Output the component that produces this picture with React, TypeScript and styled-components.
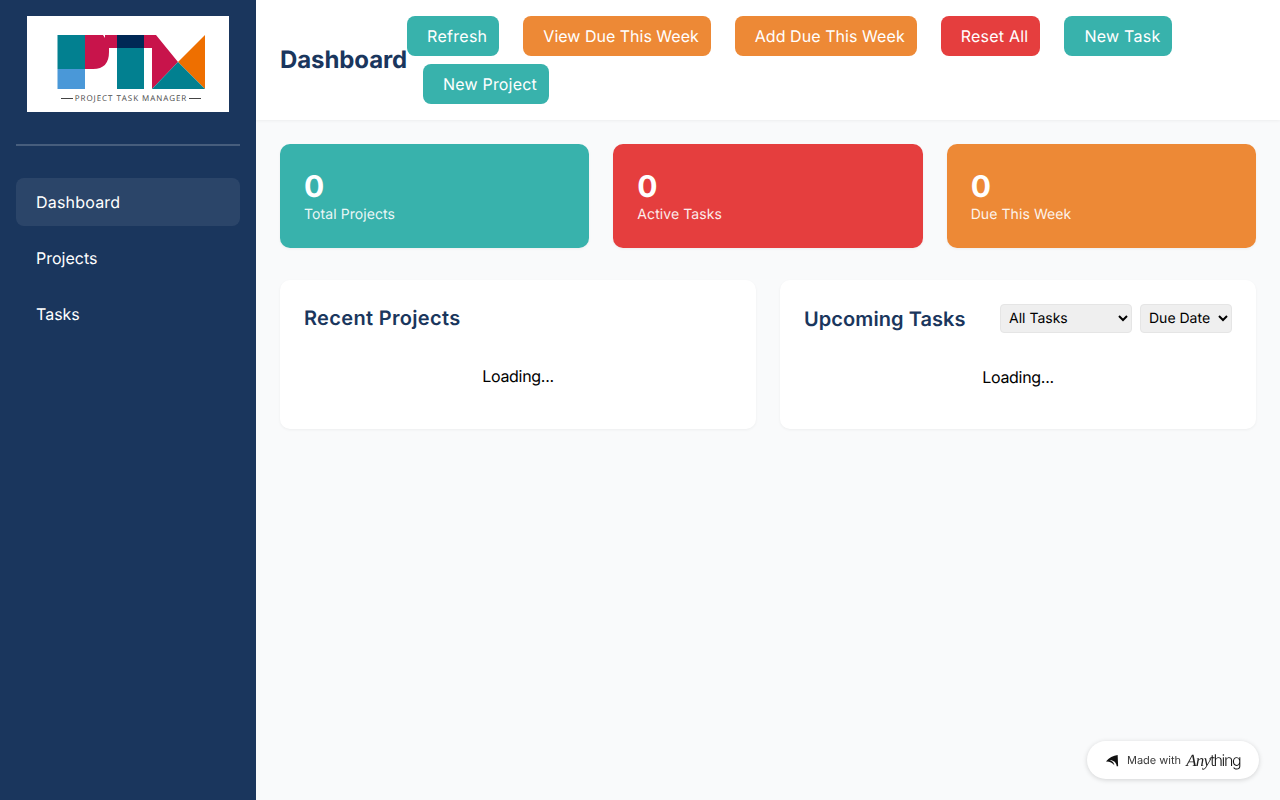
import React from "react";
import styled, { createGlobalStyle } from "styled-components";

const Global = createGlobalStyle`
  * { box-sizing: border-box; }
  html, body { margin: 0; padding: 0; height: 100%; }
  body { font-family: Inter, "Liberation Sans", sans-serif; font-weight: 370; background: #f9fafb; color: #000; overflow: hidden; text-rendering: geometricPrecision; }
`;

const Shell = styled.div`
  display: flex;
  height: 800px;
  width: 1280px;
`;
const Sidebar = styled.aside`
  width: 256px;
  flex: none;
  background: #1a365d;
  padding: 16px;
  display: flex;
  flex-direction: column;
`;
const LogoBox = styled.div`
  height: 130px;
  border-bottom: 2px solid rgba(255, 255, 255, 0.2);
  display: flex;
  justify-content: center;
  align-items: flex-start;
  margin-bottom: 32px;
`;
const LogoSvg = styled.svg`
  display: block;
  width: 202px;
  height: 96px;
`;
const NavItem = styled.a<{ $active?: boolean }>`
  display: block;
  height: 48px;
  line-height: 48px;
  padding-left: 20px;
  margin-bottom: 8px;
  border-radius: 8px;
  font-size: 16px;
  color: #fff;
  letter-spacing: ${(p) => (p.$active ? "0.2px" : "0")};
  background: ${(p) => (p.$active ? "rgba(255,255,255,0.08)" : "transparent")};
`;
const Main = styled.main`
  flex: 1;
  min-width: 0;
  display: flex;
  flex-direction: column;
`;
const Header = styled.header`
  height: 120px;
  background: #fff;
  padding: 16px 24px;
  display: flex;
  align-items: center;
  box-shadow: 0 1px 3px rgba(0, 0, 0, 0.05);
`;
const Title = styled.h1`
  margin: 0 0 2px;
  font-size: 24px;
  line-height: 29px;
  font-weight: 700;
  letter-spacing: -0.1px;
  color: #1a365d;
  flex: none;
`;
const Actions = styled.div`
  display: flex;
  flex-wrap: wrap;
  gap: 8px;
  align-content: center;
`;
const ActionButton = styled.button<{ $color: string; $first?: boolean; $track: number }>`
  height: 40px;
  padding: 0 12px 0 20px;
  margin-left: ${(p) => (p.$first ? 0 : 16)}px;
  border: none;
  border-radius: 8px;
  background: ${(p) => p.$color};
  color: #fff;
  font-family: inherit;
  font-size: 16px;
  font-weight: inherit;
  letter-spacing: ${(p) => p.$track}px;
  text-rendering: geometricPrecision;
  white-space: nowrap;
`;
const Content = styled.div`
  padding: 24px;
  display: flex;
  flex-direction: column;
  gap: 32px;
`;
const Stats = styled.div`
  display: grid;
  grid-template-columns: repeat(3, 1fr);
  gap: 24px;
`;
const StatCard = styled.div<{ $color: string }>`
  height: 104px;
  border-radius: 10px;
  background: ${(p) => p.$color};
  color: #fff;
  padding: 24px;
  box-shadow: 0 1px 3px rgba(0, 0, 0, 0.05);
`;
const StatValue = styled.div`
  font-size: 30px;
  line-height: 38px;
  font-weight: 700;
`;
const StatLabel = styled.div`
  font-size: 14px;
  line-height: 17px;
  letter-spacing: 0.08px;
  opacity: 0.9;
`;
const Panels = styled.div`
  display: grid;
  grid-template-columns: 1fr 1fr;
  gap: 24px;
`;
const Panel = styled.section`
  height: 149px;
  background: #fff;
  border-radius: 10px;
  padding: 24px;
  box-shadow: 0 1px 3px rgba(0, 0, 0, 0.05);
`;
const PanelHead = styled.div`
  display: flex;
  align-items: flex-start;
  justify-content: space-between;
  height: 29px;
`;
const PanelTitle = styled.h2<{ $track: number; $drop: number }>`
  margin: 0;
  padding-top: ${(p) => p.$drop}px;
  font-size: 20px;
  line-height: 29px;
  font-weight: 600;
  letter-spacing: ${(p) => p.$track}px;
  color: #1a365d;
`;
const Filters = styled.div`
  display: flex;
  gap: 8px;
`;
const Select = styled.select<{ $w: number }>`
  width: ${(p) => p.$w}px;
  height: 29px;
  padding: 4px;
  border: 1px solid #e5e5e5;
  border-radius: 4px;
  background-color: #efefef;
  color: #000;
  font-family: inherit;
  font-size: 14px;
  text-rendering: geometricPrecision;
`;
const Loading = styled.div<{ $top: number }>`
  margin-top: ${(p) => p.$top}px;
  text-align: center;
  font-size: 16px;
  line-height: 19px;
  letter-spacing: -0.3px;
`;
const Badge = styled.div`
  position: fixed;
  right: 21px;
  bottom: 21px;
  width: 172px;
  height: 38px;
  background: #fff;
  border-radius: 19px;
  box-shadow: 0 1px 5px rgba(0, 0, 0, 0.16);
  display: flex;
  align-items: center;
  padding-left: 18px;
  gap: 7px;
`;
const BadgeIcon = styled.svg`
  width: 15px;
  height: 15px;
  flex: none;
`;
const BadgeText = styled.span`
  font-size: 11px;
  color: #3a3a3a;
  margin-right: 4px;
  white-space: nowrap;
`;
const BrandAny = styled.span`
  font-family: "Liberation Serif", serif;
  font-style: italic;
  font-size: 17px;
  letter-spacing: -0.8px;
  color: #222;
`;
const BrandThing = styled.span`
  font-family: Inter, sans-serif;
  font-weight: 260;
  font-size: 16px;
  letter-spacing: -1.4px;
  color: #111;
`;
const Brand = styled.span`
  white-space: nowrap;
  line-height: 1;
  margin-left: -6px;
`;

const Logo = () => (
  <LogoSvg viewBox="27 16 202 96">
    <rect x="27" y="16" width="202" height="96" fill="#fff" />
    <rect x="57.5" y="35" width="27.5" height="34" fill="#028090" />
    <rect x="57.5" y="69" width="27.5" height="20" fill="#4a98d8" />
    <path d="M85 35H103L105 38V35H117V48H109V52Q109 69 93 69H85Z" fill="#c8144b" />
    <rect x="117" y="35" width="27" height="13" fill="#002855" />
    <rect x="117" y="48" width="27" height="41" fill="#028090" />
    <polygon points="144,35 156,35 178,62 152,89 152,48 144,48" fill="#c8144b" />
    <polygon points="205,35 205,89 178,62" fill="#ee6f00" />
    <polygon points="152,89 178,62 205,89" fill="#028090" />
    <rect x="61" y="98" width="12" height="1" fill="#444" />
    <rect x="189" y="98" width="12" height="1" fill="#444" />
    <text
      x="131"
      y="101"
      textAnchor="middle"
      fontFamily="'Open Sans', sans-serif"
      fontSize="8"
      letterSpacing="0.95"
      fill="#4a4a4a"
    >
      PROJECT TASK MANAGER
    </text>
  </LogoSvg>
);

export default function App() {
  return (
    <Shell>
      <Global />
      <Sidebar>
        <LogoBox>
          <Logo />
        </LogoBox>
        <NavItem $active>Dashboard</NavItem>
        <NavItem>Projects</NavItem>
        <NavItem>Tasks</NavItem>
      </Sidebar>
      <Main>
        <Header>
          <Title>Dashboard</Title>
          <Actions>
            <ActionButton $first $color="#38b2ac" $track={0.28}>Refresh</ActionButton>
            <ActionButton $color="#ed8936" $track={0}>View Due This Week</ActionButton>
            <ActionButton $color="#ed8936" $track={0.06}>Add Due This Week</ActionButton>
            <ActionButton $color="#e53e3e" $track={0.22}>Reset All</ActionButton>
            <ActionButton $color="#38b2ac" $track={0.25}>New Task</ActionButton>
            <ActionButton $color="#38b2ac" $track={0.18}>New Project</ActionButton>
          </Actions>
        </Header>
        <Content>
          <Stats>
            <StatCard $color="#38b2ac">
              <StatValue>0</StatValue>
              <StatLabel>Total Projects</StatLabel>
            </StatCard>
            <StatCard $color="#e53e3e">
              <StatValue>0</StatValue>
              <StatLabel>Active Tasks</StatLabel>
            </StatCard>
            <StatCard $color="#ed8936">
              <StatValue>0</StatValue>
              <StatLabel>Due This Week</StatLabel>
            </StatCard>
          </Stats>
          <Panels>
            <Panel>
              <PanelHead>
                <PanelTitle $track={0.33} $drop={0}>Recent Projects</PanelTitle>
              </PanelHead>
              <Loading $top={34}>Loading...</Loading>
            </Panel>
            <Panel>
              <PanelHead>
                <PanelTitle $track={0.07} $drop={1}>Upcoming Tasks</PanelTitle>
                <Filters>
                  <Select $w={132} defaultValue="all">
                    <option value="all">All Tasks</option>
                  </Select>
                  <Select $w={92} defaultValue="due">
                    <option value="due">Due Date</option>
                  </Select>
                </Filters>
              </PanelHead>
              <Loading $top={35}>Loading...</Loading>
            </Panel>
          </Panels>
        </Content>
      </Main>
      <Badge>
        <BadgeIcon viewBox="0 0 16 16">
          <path d="M13.5 2L14 14H12.5C12 10 9 7.5 5 7.8C8 8.5 9.5 10.5 10 13C8 10.5 5 8.8 1 9C4 5 9 2.5 13.5 2Z" fill="#111" />
        </BadgeIcon>
        <BadgeText>Made with</BadgeText>
        <Brand>
          <BrandAny>Any</BrandAny>
          <BrandThing>thing</BrandThing>
        </Brand>
      </Badge>
    </Shell>
  );
}
